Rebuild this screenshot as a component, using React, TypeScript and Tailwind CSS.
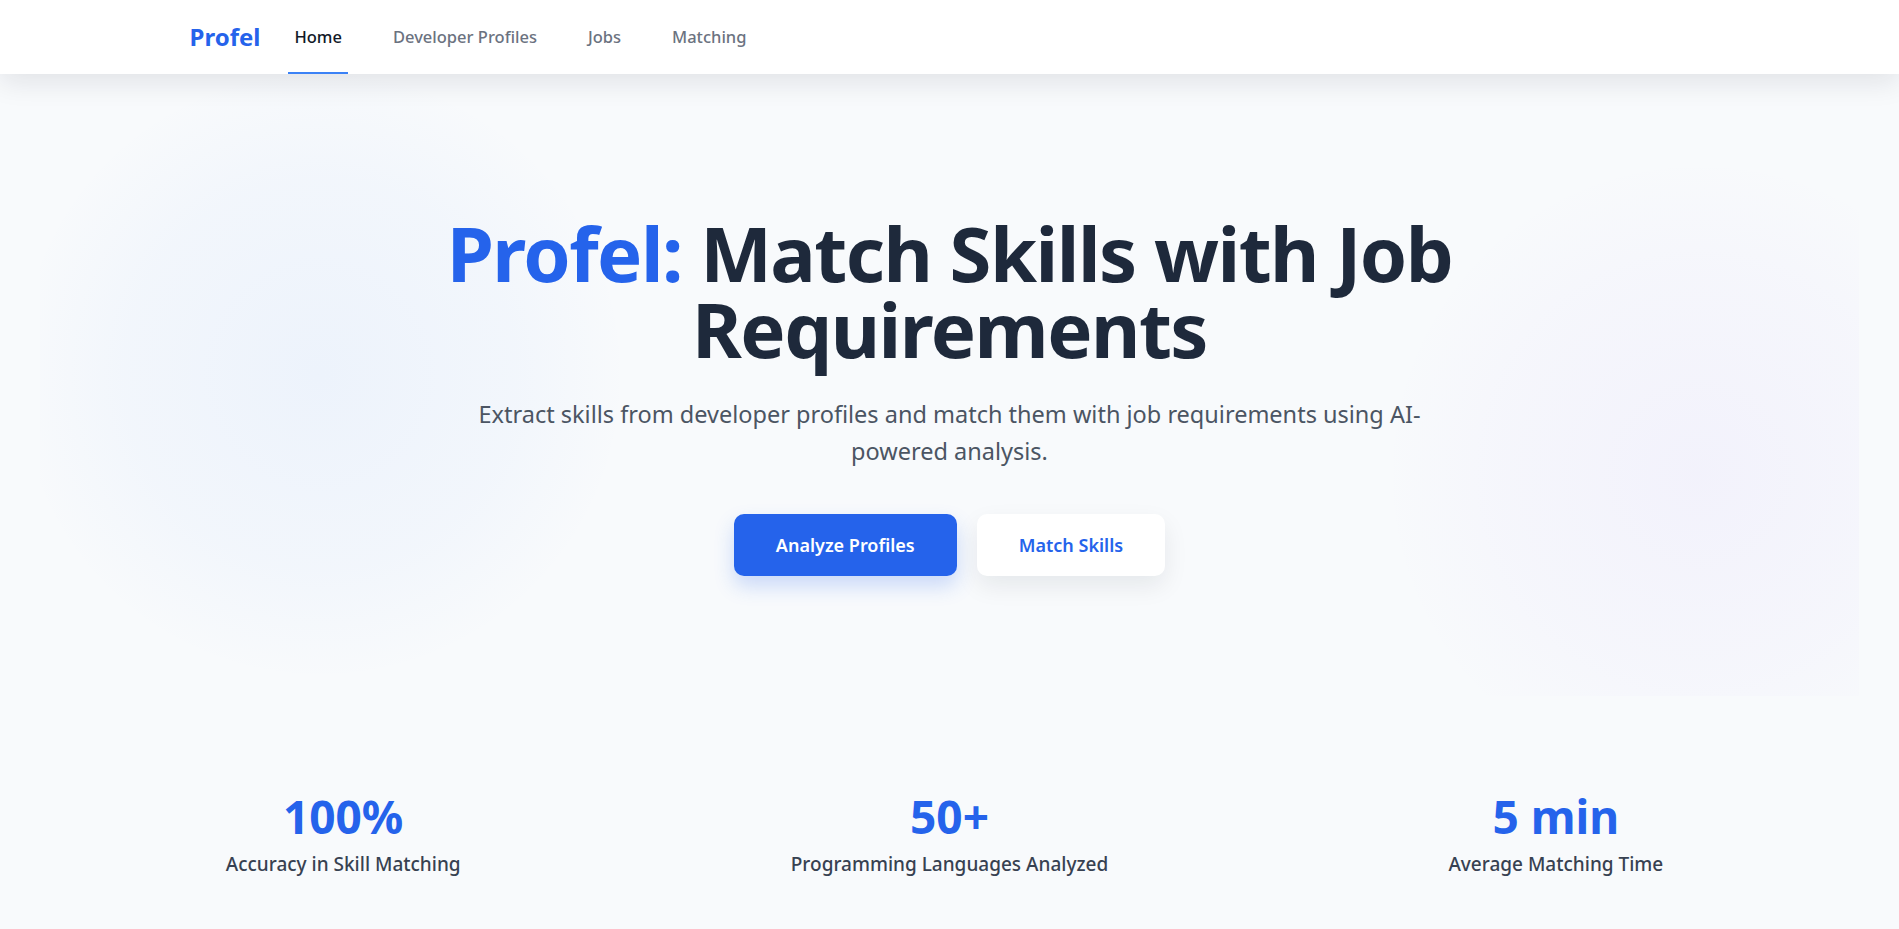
const links = [
  { label: "Home", active: true },
  { label: "Developer Profiles" },
  { label: "Jobs" },
  { label: "Matching" },
];

const stats = [
  { value: "100%", label: "Accuracy in Skill Matching" },
  { value: "50+", label: "Programming Languages Analyzed" },
  { value: "5 min", label: "Average Matching Time" },
];

const Nav = () => {
  return (
    <nav className="relative z-10 bg-white shadow-[0_8px_28px_rgba(15,23,42,0.10)]">
      <div className="mx-auto flex h-[74px] max-w-[1536px] items-center px-2">
        <div className="mr-[28px] text-[24px] font-bold text-[#2563eb]">Profel</div>
        <div className="flex h-full gap-[39px]">
          {links.map((l) => (
            <a
              key={l.label}
              href="#"
              className={
                l.active
                  ? "flex h-full items-center border-b-2 border-[#3b82f6] px-1.5 pt-0.5 text-[16.5px] font-medium text-[#111827]"
                  : "flex h-full items-center border-b-2 border-transparent px-1.5 pt-0.5 text-[16.5px] font-medium text-[#6b7280]"
              }
            >
              {l.label}
            </a>
          ))}
        </div>
      </div>
    </nav>
  );
};

const Hero = () => {
  return (
    <section className="relative mx-10 overflow-hidden">
      <div className="absolute left-[-30px] top-[-10px] h-[620px] w-[620px] rounded-full bg-[radial-gradient(circle,rgba(59,130,246,0.06)_0%,rgba(59,130,246,0.03)_45%,rgba(59,130,246,0)_70%)]" />
      <div className="absolute left-[1340px] top-[80px] h-[640px] w-[640px] rounded-full bg-[radial-gradient(circle,rgba(139,92,246,0.05)_0%,rgba(139,92,246,0.025)_45%,rgba(139,92,246,0)_70%)]" />
      <div className="relative flex flex-col items-center pb-[120px] pt-[141px] text-center">
        <h1 className="w-[1040px] text-[76px] font-bold leading-[76px] tracking-[-0.02em] text-[#1e293b]">
          <span className="text-[#2563eb]">Profel:</span> Match Skills with Job Requirements
        </h1>
        <p className="mt-[29px] w-[960px] text-[23.5px] leading-[37px] text-[#4b5563]">
          Extract skills from developer profiles and match them with job requirements using AI-powered analysis.
        </p>
        <div className="mt-[44px] flex gap-5">
          <button className="h-[62px] rounded-[10px] bg-[#2563eb] px-[42px] text-[18px] font-semibold text-white shadow-[0_10px_20px_rgba(37,99,235,0.22)]">
            Analyze Profiles
          </button>
          <button className="h-[62px] rounded-[10px] bg-white px-[42px] text-[18px] font-semibold text-[#2563eb] shadow-[0_10px_25px_rgba(15,23,42,0.08)]">
            Match Skills
          </button>
        </div>
      </div>
    </section>
  );
};

const Stats = () => {
  return (
    <section className="grid grid-cols-3 px-10 pt-[96px] pb-24">
      {stats.map((s) => (
        <div key={s.value} className="flex flex-col items-center">
          <div className="text-[46px] font-bold leading-[48px] text-[#2563eb]">{s.value}</div>
          <div className="mt-2.5 text-[19px] font-medium leading-7 text-[#374151]">{s.label}</div>
        </div>
      ))}
    </section>
  );
};

export default function App() {
  return (
    <div className="min-h-screen bg-[#f8fafc] font-['Noto_Sans',sans-serif]">
      <Nav />
      <Hero />
      <Stats />
    </div>
  );
}
